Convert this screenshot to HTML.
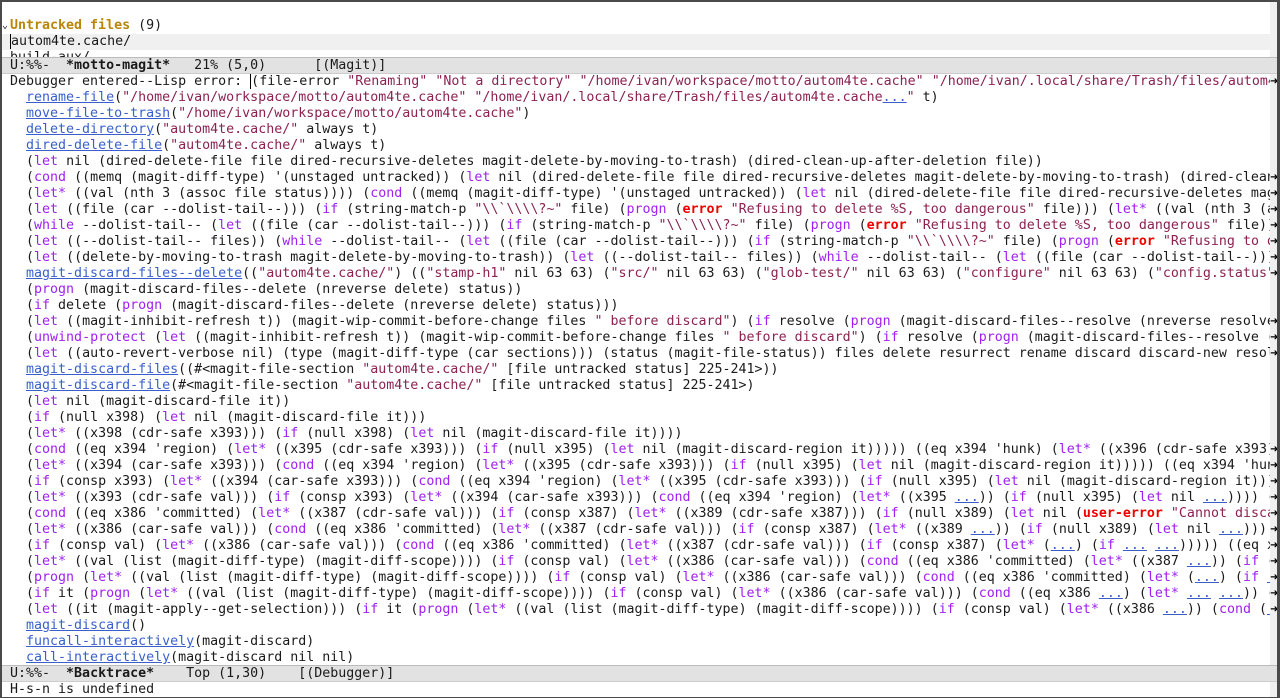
<!DOCTYPE html>
<html><head><meta charset="utf-8"><style>
html,body{margin:0;padding:0;background:#4a4a4a;}
#f{position:absolute;left:0;top:0;width:1280px;height:698px;background:#4a4a4a;overflow:hidden}
#w{position:absolute;left:2px;top:2px;width:1275px;height:695px;background:#fff;overflow:hidden}
#fr{position:absolute;left:1268px;top:0;width:8px;height:695px;background:#f0f0f0}
.l{position:absolute;left:0;width:1268px;height:16px;line-height:16px;padding-left:8px;box-sizing:border-box;white-space:pre;overflow:hidden;font-family:"DejaVu Sans Mono","Liberation Mono",monospace;font-size:13.3px;color:#1a1a1a}
.k{color:#a020f0}.s{color:#8b2252}.e{color:#e00;font-weight:bold}.a{color:#3a5fcd;text-decoration:underline}
.m{background:#e2e2e2;border-top:1px solid #bbb;border-bottom:1px solid #ccc;width:1276px}
.b{font-weight:bold}
.ar{position:absolute;left:1268px;width:8px;height:16px;line-height:16px;font-size:10px;font-family:"DejaVu Sans",sans-serif;color:#000;text-align:center}
</style></head><body><div id="f"><div id="w">
<div id="fr"></div>
<div class="l" style="top:16px"><span style="position:absolute;left:0;font-size:10px">⌄</span><span style="color:#b8860b;font-weight:bold">Untracked files</span> (9)</div>
<div class="l" style="top:32px;background:#f0f0f0;width:1276px"><span style="border-left:1px solid #000">a</span>utom4te.cache/</div>
<div class="l" style="top:48px;height:7px">build-aux/</div>
<div class="l m" style="top:55px;height:17px;line-height:16px">U:%%-  <span class="b">*motto-magit*</span>   21% (5,0)      [(Magit)]</div>
<div id="bt">
<div class="l" style="top:72px">Debugger entered--Lisp error: <span style="border-left:1px solid #000">(</span>file-error <span class="s">"Renaming"</span> <span class="s">"Not a directory"</span> <span class="s">"/home/ivan/workspace/motto/autom4te.cache"</span> <span class="s">"/home/ivan/.local/share/Trash/files/autom4te.cache"</span>)</div>
<div class="l" style="top:88px">  <span class="a">rename-file</span>(<span class="s">"/home/ivan/workspace/motto/autom4te.cache"</span> <span class="s">"/home/ivan/.local/share/Trash/files/autom4te.cache<span class="a">...</span>"</span> t)</div>
<div class="l" style="top:104px">  <span class="a">move-file-to-trash</span>(<span class="s">"/home/ivan/workspace/motto/autom4te.cache"</span>)</div>
<div class="l" style="top:120px">  <span class="a">delete-directory</span>(<span class="s">"autom4te.cache/"</span> always t)</div>
<div class="l" style="top:136px">  <span class="a">dired-delete-file</span>(<span class="s">"autom4te.cache/"</span> always t)</div>
<div class="l" style="top:152px">  (<span class="k">let</span> nil (dired-delete-file file dired-recursive-deletes magit-delete-by-moving-to-trash) (dired-clean-up-after-deletion file))</div>
<div class="l" style="top:168px">  (<span class="k">cond</span> ((memq (magit-diff-type) '(unstaged untracked)) (<span class="k">let</span> nil (dired-delete-file file dired-recursive-deletes magit-delete-by-moving-to-trash) (dired-clean-up-after-deletion file)))</div>
<div class="l" style="top:184px">  (<span class="k">let*</span> ((val (nth 3 (assoc file status)))) (<span class="k">cond</span> ((memq (magit-diff-type) '(unstaged untracked)) (<span class="k">let</span> nil (dired-delete-file file dired-recursive-deletes magit-delete</div>
<div class="l" style="top:200px">  (<span class="k">let</span> ((file (car --dolist-tail--))) (<span class="k">if</span> (string-match-p <span class="s">"\\`\\\\?~"</span> file) (<span class="k">progn</span> (<span class="e">error</span> <span class="s">"Refusing to delete %S, too dangerous"</span> file))) (<span class="k">let*</span> ((val (nth 3 (assoc</div>
<div class="l" style="top:216px">  (<span class="k">while</span> --dolist-tail-- (<span class="k">let</span> ((file (car --dolist-tail--))) (<span class="k">if</span> (string-match-p <span class="s">"\\`\\\\?~"</span> file) (<span class="k">progn</span> (<span class="e">error</span> <span class="s">"Refusing to delete %S, too dangerous"</span> file)))</div>
<div class="l" style="top:232px">  (<span class="k">let</span> ((--dolist-tail-- files)) (<span class="k">while</span> --dolist-tail-- (<span class="k">let</span> ((file (car --dolist-tail--))) (<span class="k">if</span> (string-match-p <span class="s">"\\`\\\\?~"</span> file) (<span class="k">progn</span> (<span class="e">error</span> <span class="s">"Refusing to delete</span></div>
<div class="l" style="top:248px">  (<span class="k">let</span> ((delete-by-moving-to-trash magit-delete-by-moving-to-trash)) (<span class="k">let</span> ((--dolist-tail-- files)) (<span class="k">while</span> --dolist-tail-- (<span class="k">let</span> ((file (car --dolist-tail--)))</div>
<div class="l" style="top:264px">  <span class="a">magit-discard-files--delete</span>((<span class="s">"autom4te.cache/"</span>) ((<span class="s">"stamp-h1"</span> nil 63 63) (<span class="s">"src/"</span> nil 63 63) (<span class="s">"glob-test/"</span> nil 63 63) (<span class="s">"configure"</span> nil 63 63) (<span class="s">"config.status"</span> nil</div>
<div class="l" style="top:280px">  (<span class="k">progn</span> (magit-discard-files--delete (nreverse delete) status))</div>
<div class="l" style="top:296px">  (<span class="k">if</span> delete (<span class="k">progn</span> (magit-discard-files--delete (nreverse delete) status)))</div>
<div class="l" style="top:312px">  (<span class="k">let</span> ((magit-inhibit-refresh t)) (magit-wip-commit-before-change files <span class="s">" before discard"</span>) (<span class="k">if</span> resolve (<span class="k">progn</span> (magit-discard-files--resolve (nreverse resolve)))</div>
<div class="l" style="top:328px">  (<span class="k">unwind-protect</span> (<span class="k">let</span> ((magit-inhibit-refresh t)) (magit-wip-commit-before-change files <span class="s">" before discard"</span>) (<span class="k">if</span> resolve (<span class="k">progn</span> (magit-discard-files--resolve (n</div>
<div class="l" style="top:344px">  (<span class="k">let</span> ((auto-revert-verbose nil) (type (magit-diff-type (car sections))) (status (magit-file-status)) files delete resurrect rename discard discard-new resolve)</div>
<div class="l" style="top:360px">  <span class="a">magit-discard-files</span>((#&lt;magit-file-section <span class="s">"autom4te.cache/"</span> [file untracked status] 225-241&gt;))</div>
<div class="l" style="top:376px">  <span class="a">magit-discard-file</span>(#&lt;magit-file-section <span class="s">"autom4te.cache/"</span> [file untracked status] 225-241&gt;)</div>
<div class="l" style="top:392px">  (<span class="k">let</span> nil (magit-discard-file it))</div>
<div class="l" style="top:408px">  (<span class="k">if</span> (null x398) (<span class="k">let</span> nil (magit-discard-file it)))</div>
<div class="l" style="top:424px">  (<span class="k">let*</span> ((x398 (cdr-safe x393))) (<span class="k">if</span> (null x398) (<span class="k">let</span> nil (magit-discard-file it))))</div>
<div class="l" style="top:440px">  (<span class="k">cond</span> ((eq x394 'region) (<span class="k">let*</span> ((x395 (cdr-safe x393))) (<span class="k">if</span> (null x395) (<span class="k">let</span> nil (magit-discard-region it))))) ((eq x394 'hunk) (<span class="k">let*</span> ((x396 (cdr-safe x393)))</div>
<div class="l" style="top:456px">  (<span class="k">let*</span> ((x394 (car-safe x393))) (<span class="k">cond</span> ((eq x394 'region) (<span class="k">let*</span> ((x395 (cdr-safe x393))) (<span class="k">if</span> (null x395) (<span class="k">let</span> nil (magit-discard-region it))))) ((eq x394 'hunk)</div>
<div class="l" style="top:472px">  (<span class="k">if</span> (consp x393) (<span class="k">let*</span> ((x394 (car-safe x393))) (<span class="k">cond</span> ((eq x394 'region) (<span class="k">let*</span> ((x395 (cdr-safe x393))) (<span class="k">if</span> (null x395) (<span class="k">let</span> nil (magit-discard-region it)))</div>
<div class="l" style="top:488px">  (<span class="k">let*</span> ((x393 (cdr-safe val))) (<span class="k">if</span> (consp x393) (<span class="k">let*</span> ((x394 (car-safe x393))) (<span class="k">cond</span> ((eq x394 'region) (<span class="k">let*</span> ((x395 <span class="a">...</span>)) (<span class="k">if</span> (null x395) (<span class="k">let</span> nil <span class="a">...</span>)))) ((eq</div>
<div class="l" style="top:504px">  (<span class="k">cond</span> ((eq x386 'committed) (<span class="k">let*</span> ((x387 (cdr-safe val))) (<span class="k">if</span> (consp x387) (<span class="k">let*</span> ((x389 (cdr-safe x387))) (<span class="k">if</span> (null x389) (<span class="k">let</span> nil (<span class="e">user-error</span> <span class="s">"Cannot discard</span></div>
<div class="l" style="top:520px">  (<span class="k">let*</span> ((x386 (car-safe val))) (<span class="k">cond</span> ((eq x386 'committed) (<span class="k">let*</span> ((x387 (cdr-safe val))) (<span class="k">if</span> (consp x387) (<span class="k">let*</span> ((x389 <span class="a">...</span>)) (<span class="k">if</span> (null x389) (<span class="k">let</span> nil <span class="a">...</span>)))</div>
<div class="l" style="top:536px">  (<span class="k">if</span> (consp val) (<span class="k">let*</span> ((x386 (car-safe val))) (<span class="k">cond</span> ((eq x386 'committed) (<span class="k">let*</span> ((x387 (cdr-safe val))) (<span class="k">if</span> (consp x387) (<span class="k">let*</span> (<span class="a">...</span>) (<span class="k">if</span> <span class="a">...</span> <span class="a">...</span>))))) ((eq x3</div>
<div class="l" style="top:552px">  (<span class="k">let*</span> ((val (list (magit-diff-type) (magit-diff-scope)))) (<span class="k">if</span> (consp val) (<span class="k">let*</span> ((x386 (car-safe val))) (<span class="k">cond</span> ((eq x386 'committed) (<span class="k">let*</span> ((x387 <span class="a">...</span>)) (<span class="k">if</span> (</div>
<div class="l" style="top:568px">  (<span class="k">progn</span> (<span class="k">let*</span> ((val (list (magit-diff-type) (magit-diff-scope)))) (<span class="k">if</span> (consp val) (<span class="k">let*</span> ((x386 (car-safe val))) (<span class="k">cond</span> ((eq x386 'committed) (<span class="k">let*</span> (<span class="a">...</span>) (<span class="k">if</span> <span class="a">...</span></div>
<div class="l" style="top:584px">  (<span class="k">if</span> it (<span class="k">progn</span> (<span class="k">let*</span> ((val (list (magit-diff-type) (magit-diff-scope)))) (<span class="k">if</span> (consp val) (<span class="k">let*</span> ((x386 (car-safe val))) (<span class="k">cond</span> ((eq x386 <span class="a">...</span>) (<span class="k">let*</span> <span class="a">...</span> <span class="a">...</span>)) (</div>
<div class="l" style="top:600px">  (<span class="k">let</span> ((it (magit-apply--get-selection))) (<span class="k">if</span> it (<span class="k">progn</span> (<span class="k">let*</span> ((val (list (magit-diff-type) (magit-diff-scope)))) (<span class="k">if</span> (consp val) (<span class="k">let*</span> ((x386 <span class="a">...</span>)) (<span class="k">cond</span> (<span class="a">...</span></div>
<div class="l" style="top:616px">  <span class="a">magit-discard</span>()</div>
<div class="l" style="top:632px">  <span class="a">funcall-interactively</span>(magit-discard)</div>
<div class="l" style="top:648px">  <span class="a">call-interactively</span>(magit-discard nil nil)</div>
</div>
<div class="ar" style="top:72px">➜</div><div class="ar" style="top:168px">➜</div><div class="ar" style="top:184px">➜</div><div class="ar" style="top:200px">➜</div><div class="ar" style="top:216px">➜</div><div class="ar" style="top:232px">➜</div><div class="ar" style="top:248px">➜</div><div class="ar" style="top:264px">➜</div><div class="ar" style="top:312px">➜</div><div class="ar" style="top:328px">➜</div><div class="ar" style="top:344px">➜</div><div class="ar" style="top:440px">➜</div><div class="ar" style="top:456px">➜</div><div class="ar" style="top:472px">➜</div><div class="ar" style="top:488px">➜</div><div class="ar" style="top:504px">➜</div><div class="ar" style="top:520px">➜</div><div class="ar" style="top:536px">➜</div><div class="ar" style="top:552px">➜</div><div class="ar" style="top:568px">➜</div><div class="ar" style="top:584px">➜</div><div class="ar" style="top:600px">➜</div>
<div class="l m" style="top:663px;height:17px">U:%%-  <span class="b">*Backtrace*</span>    Top (1,30)    [(Debugger)]</div>
<div class="l" style="top:680px;width:1276px">H-s-n is undefined</div>
</div></div></body></html>
